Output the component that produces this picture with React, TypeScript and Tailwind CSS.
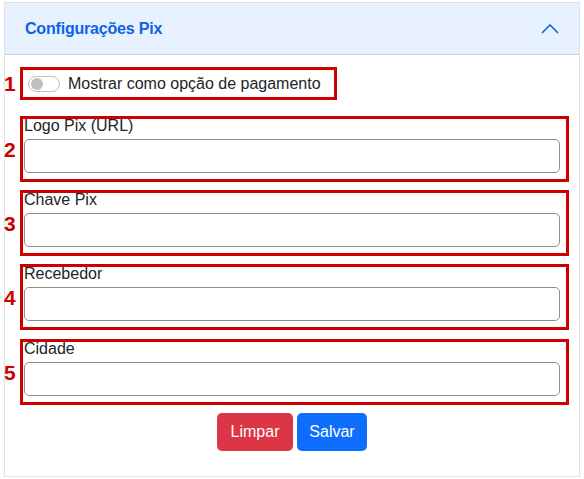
const fields = [
  { n: 2, label: "Logo Pix (URL)", mt: "mt-[16px]" },
  { n: 3, label: "Chave Pix", mt: "mt-[8px]" },
  { n: 4, label: "Recebedor", mt: "mt-[8px]" },
  { n: 5, label: "Cidade", mt: "mt-[9px]" },
];

function Num({ n }: { n: number }) {
  return (
    <span className="w-[16px] -ml-[1px] text-[21px] font-bold leading-none text-[#cc0000]">
      {n}
    </span>
  );
}

export default function App() {
  return (
    <div
      className="w-[584px] h-[479px] bg-white pl-[4px] pt-[2px] text-[#212529]"
      style={{ fontFamily: '"Liberation Sans", Arial, sans-serif' }}
    >
      <div className="w-[576px] h-[475px] border border-[#dee2e6]">
        <div className="h-[52px] bg-[#e7f1ff] border-b border-[#cad3df] flex items-center justify-between pl-[20px] pr-[20px]">
          <span className="text-[16px] font-bold text-[#0c63e4] tracking-[-0.2px]">
            Configurações Pix
          </span>
          <svg width="18" height="10" viewBox="0 0 18 10" fill="none">
            <path d="M1 9 L9 1 L17 9" stroke="#0c63e4" strokeWidth="1.6" />
          </svg>
        </div>

        <div className="pt-[12px]">
          <div className="flex items-center">
            <Num n={1} />
            <div className="w-[317px] h-[33px] border-[3px] border-[#cc0000] flex items-center pl-[5px] gap-[8px] whitespace-nowrap">
              <span className="w-[32px] h-[16px] rounded-full border border-[#bfbfbf] flex items-center px-[2px]">
                <span className="w-[12px] h-[12px] rounded-full bg-[#bfbfbf]" />
              </span>
              <span className="text-[16px] leading-none">Mostrar como opção de pagamento</span>
            </div>
          </div>

          {fields.map((f) => (
            <div key={f.n} className={`flex items-center ${f.mt}`}>
              <Num n={f.n} />
              <div className="w-[549px] h-[66px] border-[3px] border-[#cc0000] pl-[1px] pr-[6px]">
                <label className="block text-[16px] leading-[14px] h-[20px]">{f.label}</label>
                <input
                  className="block w-full h-[34px] rounded-[5px] border border-[#8f8f8f] bg-white outline-none"
                  type="text"
                />
              </div>
            </div>
          ))}

          <div className="flex justify-center gap-[4px] mt-[8px]">
            <button className="h-[38px] w-[76px] rounded-[5px] bg-[#dc3545] text-white text-[16px]">
              Limpar
            </button>
            <button className="h-[38px] w-[70px] rounded-[5px] bg-[#0d6efd] text-white text-[16px]">
              Salvar
            </button>
          </div>
        </div>
      </div>
    </div>
  );
}
